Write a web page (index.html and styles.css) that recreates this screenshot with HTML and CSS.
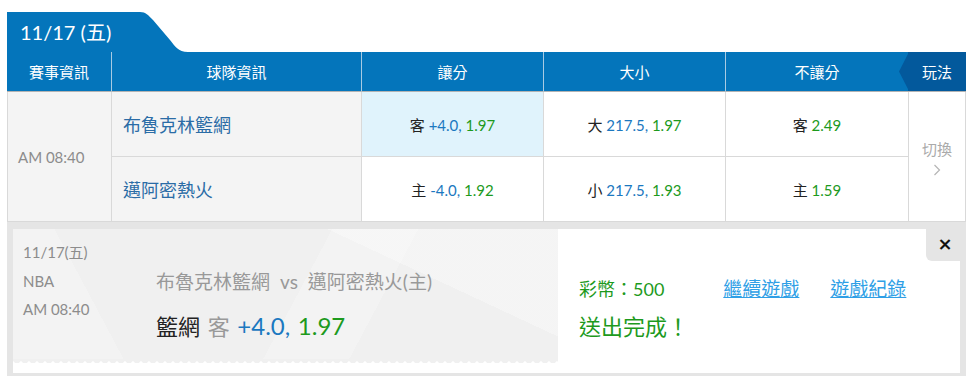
FILE: index.html
```html
<!DOCTYPE html>
<html lang="zh-Hant">

<head>
    <meta charset="UTF-8">
    <meta name="viewport" content="width=device-width, initial-scale=1.0">
    <title>NBA 投注</title>
    <link rel="stylesheet" href="styles.css">
</head>

<body>
    <div class="board">
        <!-- date tab -->
        <div class="date-tab">
            <span class="date-label">11/17 (五)</span>
            <svg class="tab-curve" width="50" height="40" viewBox="0 0 50 40">
                <path d="M0 0 C6 0 8 3 13 8 L30 28 C35 34 38 40 48 40 H50 V40 H0 Z" fill="#0475bb" />
            </svg>
        </div>

        <!-- odds table -->
        <div class="odds-table">
            <div class="th th-first">賽事資訊</div>
            <div class="th">球隊資訊</div>
            <div class="th">讓分</div>
            <div class="th">大小</div>
            <div class="th">不讓分</div>
            <div class="th th-play">玩法</div>

            <div class="td td-time">AM 08:40</div>
            <div class="td td-team">布魯克林籃網</div>
            <div class="td td-odds selected"><span><span class="side">客</span> <span class="line">+4.0,</span> <span class="price">1.97</span></span></div>
            <div class="td td-odds"><span><span class="side">大</span> <span class="line">217.5,</span> <span class="price">1.97</span></span></div>
            <div class="td td-odds"><span><span class="side">客</span> <span class="price">2.49</span></span></div>
            <div class="td td-switch">
                <span>切換</span>
                <svg width="8" height="12" viewBox="0 0 8 12">
                    <polyline points="1.5,1 6.5,6 1.5,11" fill="none" stroke="#b5b5b5" stroke-width="1.2" />
                </svg>
            </div>

            <div class="td td-team">邁阿密熱火</div>
            <div class="td td-odds"><span><span class="side">主</span> <span class="line">-4.0,</span> <span class="price">1.92</span></span></div>
            <div class="td td-odds"><span><span class="side">小</span> <span class="line">217.5,</span> <span class="price">1.93</span></span></div>
            <div class="td td-odds"><span><span class="side">主</span> <span class="price">1.59</span></span></div>
        </div>

        <!-- result panel -->
        <div class="result-panel">
            <div class="result-card">
                <div class="ticket">
                    <div class="ticket-meta">
                        <div>11/17(五)</div>
                        <div>NBA</div>
                        <div>AM 08:40</div>
                    </div>
                    <div class="ticket-bet">
                        <div class="matchup">布魯克林籃網<span class="vs">vs</span>邁阿密熱火(主)</div>
                        <div class="pick"><span class="pick-team">籃網</span> <span class="pick-side">客</span> <span class="line">+4.0,</span> <span class="price">1.97</span></div>
                    </div>
                </div>
                <div class="result-info">
                    <div class="result-row">
                        <span class="coins">彩幣：500</span>
                        <a href="#" class="result-link">繼續遊戲</a>
                        <a href="#" class="result-link">遊戲紀錄</a>
                    </div>
                    <div class="done">送出完成！</div>
                </div>
                <button type="button" class="close-btn">×</button>
            </div>
        </div>
    </div>
</body>

</html>
```

FILE: styles.css
```css
body {
    margin: 0;
    padding: 0;
    background-color: #fff;
    font-family: 'Lato', 'Noto Sans CJK TC', sans-serif;
}

.board {
    width: 959px;
    margin: 12px 0 0 7px;
}

/* date tab */
.date-tab {
    display: flex;
    height: 40px;
}

.date-label {
    width: 120px;
    padding-left: 13px;
    background-color: #0475bb;
    color: #fff;
    font-size: 20px;
    line-height: 40px;
}

.tab-curve {
    display: block;
}

/* odds table */
.odds-table {
    display: grid;
    grid-template-columns: 104px 250px 182px 182px 183px 58px;
    grid-template-rows: 40px 65px 65px;
}

.th {
    box-sizing: border-box;
    display: flex;
    align-items: center;
    justify-content: center;
    background-color: #0475bb;
    color: #fff;
    font-size: 15px;
    border-left: 1px solid #a9cbe3;
    border-bottom: 1px solid #b3b3b3;
}

.th-first {
    border-left: none;
}

.th-play {
    position: relative;
    background-color: #03599c;
    border-left: none;
}

.th-play::before {
    content: '';
    position: absolute;
    left: -9px;
    top: 0;
    width: 10px;
    height: 39px;
    background-color: #03599c;
    clip-path: polygon(100% 0, 0 50%, 100% 100%);
}

.td {
    box-sizing: border-box;
    display: flex;
    align-items: center;
    background-color: #fff;
    border-left: 1px solid #d9d9d9;
    border-bottom: 1px solid #d9d9d9;
    font-size: 15px;
}

.td-time {
    grid-row: span 2;
    padding-left: 10px;
    background-color: #f4f4f4;
    color: #8c8c8c;
}

.td-team {
    padding-left: 11px;
    background-color: #f4f4f4;
    color: #2b6ca6;
    font-size: 18px;
}

.td-odds {
    justify-content: center;
}

.td-odds.selected {
    background-color: #e0f3fc;
}

.td-switch {
    grid-row: span 2;
    flex-direction: column;
    justify-content: center;
    gap: 5px;
    color: #aaa;
    border-right: 1px solid #d9d9d9;
}

.side {
    color: #222;
}

.line {
    color: #1b78c0;
}

.price {
    color: #1d9a1d;
}

/* result panel */
.result-panel {
    padding: 7px 6px 3px 6px;
    background-color: #e5e5e5;
}

.result-card {
    position: relative;
    display: flex;
    height: 144px;
    background-color: #fff;
}

.ticket {
    position: relative;
    display: flex;
    width: 545px;
    height: 130px;
    background:
        linear-gradient(118deg, transparent 0 52%, rgba(255, 255, 255, 0.22) 52% 66%, transparent 66%),
        linear-gradient(205deg, rgba(255, 255, 255, 0.3) 0 28%, transparent 28%),
        linear-gradient(62deg, rgba(255, 255, 255, 0.22) 0 18%, transparent 18%),
        #f0f0f0;
}

.ticket::after {
    content: '';
    position: absolute;
    left: 0;
    right: 0;
    top: 100%;
    height: 4px;
    background: radial-gradient(circle at 4px 0, #f0f0f0 4px, transparent 4.5px) 0 0 / 8px 4px repeat-x;
}

.ticket-meta {
    width: 133px;
    padding: 9px 0 0 10px;
    color: #8c8c8c;
    font-size: 15px;
    line-height: 28.5px;
}

.ticket-bet {
    padding-top: 40px;
}

.matchup {
    color: #999;
    font-size: 19px;
    line-height: 26px;
}

.vs {
    padding: 0 10px;
}

.pick {
    margin-top: 16px;
    font-size: 22px;
    line-height: 30px;
    white-space: pre;
    word-spacing: 2px;
}

.pick .line,
.pick .price {
    font-size: 24px;
}

.pick-team {
    color: #222;
}

.pick-side {
    color: #999;
}

.result-info {
    padding: 48px 0 0 21px;
}

.result-row {
    display: flex;
    align-items: center;
    line-height: 24px;
}

.coins {
    color: #1d9a1d;
    font-size: 18px;
}

.result-link {
    margin-left: 59px;
    color: #2f9fe6;
    font-size: 19px;
}

.result-link + .result-link {
    margin-left: 31px;
}

.done {
    margin-top: 11px;
    color: #1d9a1d;
    font-size: 22px;
    line-height: 30px;
}

.close-btn {
    position: absolute;
    top: 0;
    right: 0;
    width: 34px;
    height: 32px;
    padding: 0 0 4px 4px;
    border: none;
    border-bottom-left-radius: 6px;
    background-color: #e5e5e5;
    color: #111;
    font-family: 'DejaVu Sans', sans-serif;
    font-size: 18px;
    font-weight: bold;
    cursor: pointer;
}
```
